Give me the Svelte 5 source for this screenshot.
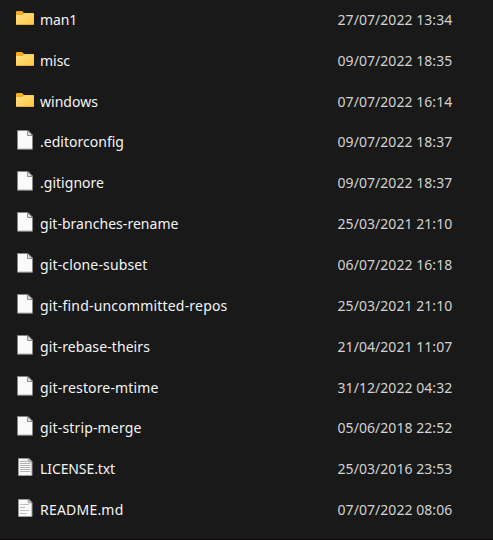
<script>
  const rows = [
    ['folder', 'man1', '27/07/2022 13:34', 37],
    ['folder', 'misc', '09/07/2022 18:35', 30],
    ['folder', 'windows', '07/07/2022 16:14', 58],
    ['file', '.editorconfig', '09/07/2022 18:37', 84],
    ['file', '.gitignore', '09/07/2022 18:37', 64],
    ['file', 'git-branches-rename', '25/03/2021 21:10', 138.5],
    ['file', 'git-clone-subset', '06/07/2022 16:18', 107.5],
    ['file', 'git-find-uncommitted-repos', '25/03/2021 21:10', 187.5],
    ['file', 'git-rebase-theirs', '21/04/2021 11:07', 110],
    ['file', 'git-restore-mtime', '31/12/2022 04:32', 118.5],
    ['file', 'git-strip-merge', '05/06/2018 22:52', 101.5],
    ['text', 'LICENSE.txt', '25/03/2016 23:53', 75],
    ['markdown', 'README.md', '07/07/2022 08:06', 83.5]
  ];

  function fit(node, width) {
    const natural = node.getBoundingClientRect().width;
    node.style.letterSpacing = `${(width - natural) / node.textContent.length}px`;
  }
</script>

<main>
  {#each rows as [kind, name, date, width]}
    <div class="row">
      <svg class="icon" class:document={kind !== 'folder'} viewBox="0 0 20 22" aria-hidden="true">
        {#if kind === 'folder'}
          <defs>
            <linearGradient id="gold" x1="0" y1="0" x2="1" y2="1">
              <stop offset="0" stop-color="#ffe08c" />
              <stop offset="1" stop-color="#ffc83d" />
            </linearGradient>
          </defs>
          <path d="M1 4.2Q1 3 2.2 3H7L9 5H18Q19 5 19 6V10H1Z" fill="#f6ad18" />
          <path d="M1 7H7.5L9 5.3H18Q19 5.3 19 6.3V16Q19 17 18 17H2Q1 17 1 16Z" fill="url(#gold)" />
          <path d="M1.3 16.5H18.7" stroke="#dda638" stroke-width=".8" />
        {:else if kind === 'file'}
          <path d="M2.5 1.5H13L17.5 6V20.2H2.5Z" fill="#fafafa" stroke="#858585" />
          <path d="M12.5 1.5V6.5H17.5Z" fill="#dedede" stroke="#777" stroke-width=".8" />
        {:else}
          <path d="M3.5 2.5H14L17 5.5V19.5H3.5Z" fill="#f8f8f8" stroke="#999" />
          <path d="M13.2 2.5V5.8H17Z" fill="#ddd" stroke="#888" stroke-width=".8" />
          {#if kind === 'text'}
            <path d="M5 5.5H12M5 7.5H15.5M5 9.5H15.5M5 11.5H15.5M5 13.5H15.5M5 15.5H15.5" stroke="#aaa" stroke-width=".9" />
          {:else}
            <path d="M5 7.5H14M5 10.5H10M5 13.5H14M5 16.5H12" stroke="#b5b5b5" stroke-width=".9" />
          {/if}
        {/if}
      </svg>
      <span class="name"><span class="label" use:fit={width}>{name}</span></span>
      <span class="date"><span class="label" use:fit={114.8}>{date}</span></span>
    </div>
  {/each}
</main>

<style>
  main {
    box-sizing: border-box;
    width: 493px;
    height: 540px;
    overflow: hidden;
    background: #191919;
    border-bottom: 1px solid #0d080c;
    font: 14px/20px "Noto Sans", "Open Sans", sans-serif;
    color: #f4f4f4;
  }
  .row {
    box-sizing: border-box;
    display: flex;
    align-items: center;
    height: 40.85px;
    padding: 0 0 1px 15px;
  }
  .icon {
    flex: none;
    width: 20px;
    height: 22px;
    margin: 0 5px 1.5px 0;
  }
  .icon.document {
    margin-bottom: 4px;
  }
  .name {
    width: 297.5px;
    flex: none;
  }
  .date {
    color: #d2d2d2;
  }
  .label {
    display: inline-block;
    white-space: nowrap;
  }
</style>
